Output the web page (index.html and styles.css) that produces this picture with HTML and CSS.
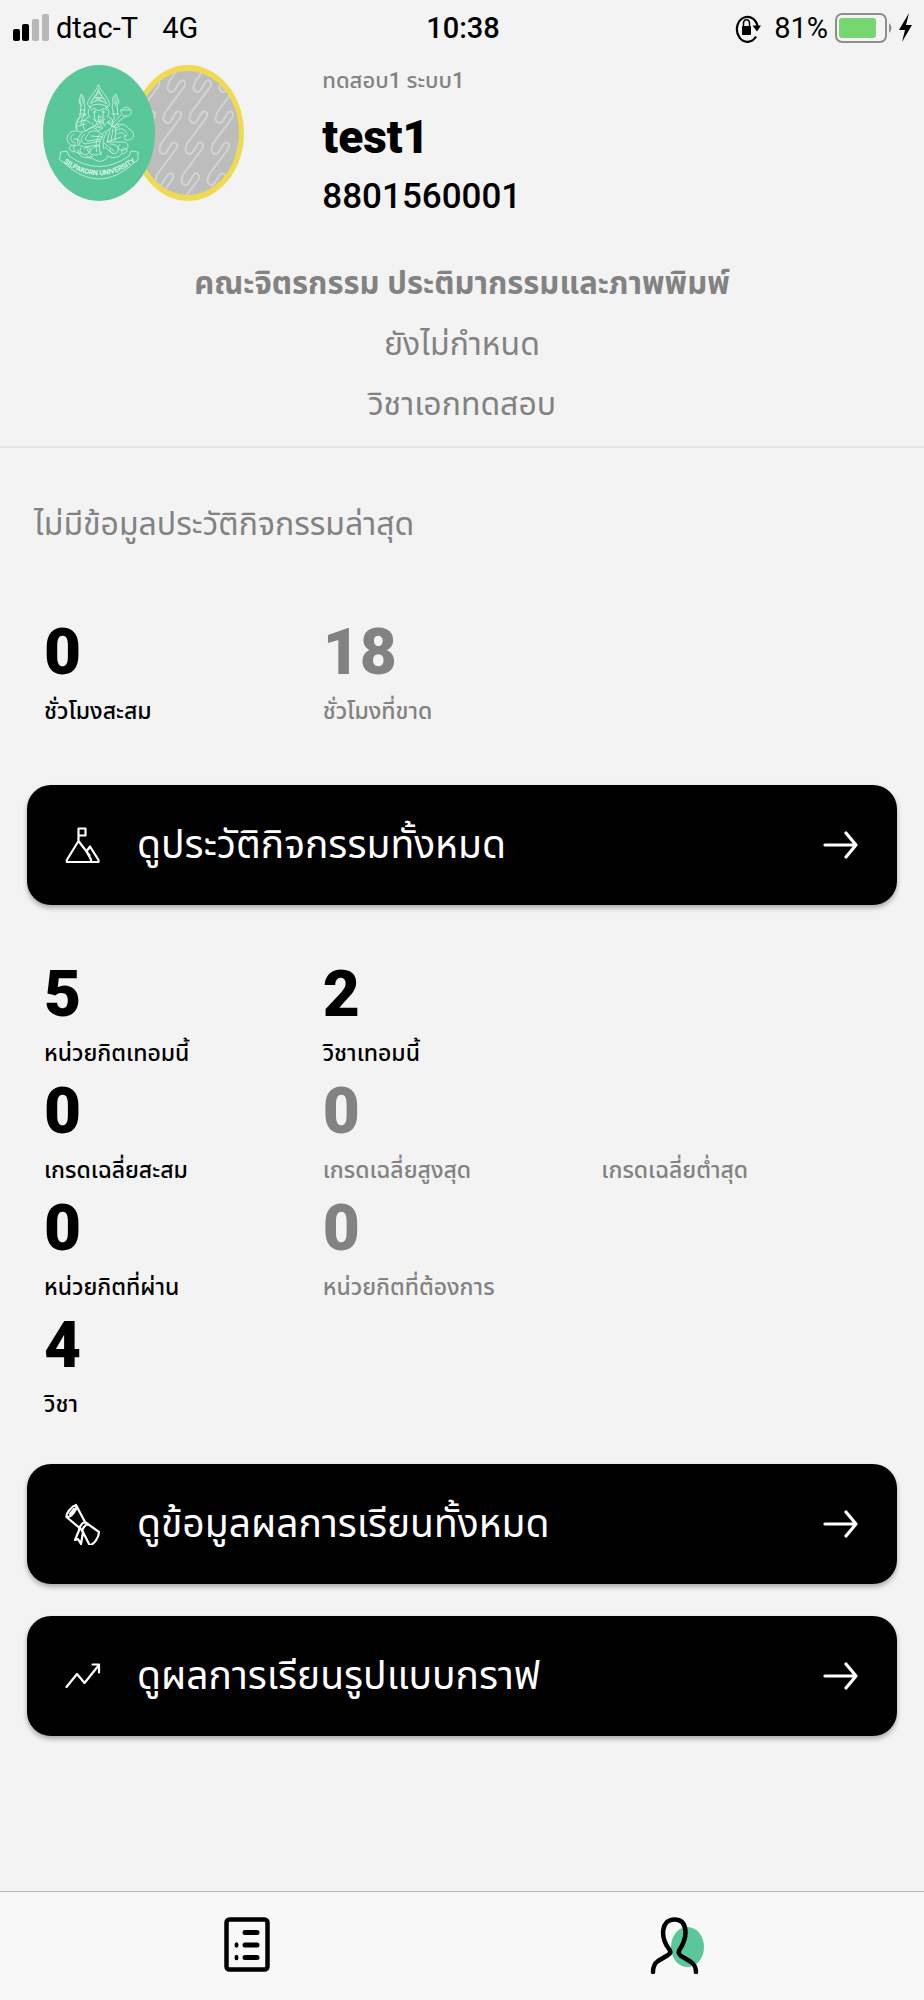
FILE: index.html
```html
<!DOCTYPE html>
<html lang="th">
<head>
<meta charset="utf-8">
<meta name="viewport" content="width=device-width, initial-scale=1">
<title>test1</title>
<link rel="stylesheet" href="styles.css">
</head>
<body>
<div class="status">
  <div class="status-left">
    <svg width="38" height="28" viewBox="0 0 38 28" aria-hidden="true"><rect x="1" y="15" width="7" height="12" rx="2"/><rect x="10" y="10" width="7" height="17" rx="2"/><rect x="20" y="5" width="7" height="22" rx="2" fill="#b8b8b8"/><rect x="30" y="0" width="7" height="27" rx="2" fill="#b8b8b8"/></svg>
    <span>dtac-T</span><span class="network">4G</span>
  </div>
  <time class="clock">10:38</time>
  <div class="status-right">
    <svg width="28" height="30" viewBox="0 0 28 30" aria-hidden="true"><path d="M22 23.500A10.500 12.500 0 1 1 23.500 13" fill="none" stroke="#000" stroke-width="2.200"/><path d="M18.500 12.500h8.500l-4 6z"/><rect x="8" y="13" width="9" height="9" rx="1"/><path d="M9.500 14v-3.500c0-5 6-5 6 0V14" fill="none" stroke="#000" stroke-width="1.500"/></svg>
    <span class="percent">81%</span>
    <svg width="80" height="32" viewBox="0 0 80 32" aria-hidden="true"><rect x="2" y="2" width="50" height="28" rx="6" fill="none" stroke="#8e8e8e" stroke-width="2"/><rect x="5" y="6" width="37" height="20" rx="3" fill="#77d572"/><path d="M55 11q5 5 0 10z" fill="#8e8e8e"/><path d="M75 1 65 18h6l-3 12 10-17h-6z"/></svg>
  </div>
</div>

<header class="profile">
  <div class="profile-row">
    <div class="avatars">
      <svg class="avatar" width="112" height="136" viewBox="0 0 112 136" role="img" aria-label="Silpakorn University">
        <ellipse cx="56" cy="68" rx="56" ry="68" fill="#5ac79a"/>
        <g class="emblem">
          <path d="M55.500 20C53 27 46 32 44 39l4 4M55.500 20C58 27 65 32 67 39l-4 4M55.500 24c-1 6-6 9-8 14M55.500 24c1 6 6 9 8 14M55.500 27l-3 5 3 3 3-3zM49 35q6-6 13 0M47 39q8-7 17 0M46 42q9-6 19 0M52 36l3-3 4 3"/>
          <path d="M48 42c-3 1-4 7-1 10M63 42c3 1 4 7 1 10M48 45q3-3 6 0 2 1 4 0 3-3 6 0M50 47h3M59 47h3M52 45c-2 8 1 12 4 17M60 45c1 8-2 11 2 16M56 50c-2 5 1 9 4 13l-4 2M55 52h4M55 55h4M56 58h4"/>
          <path d="M39 41c-3-4-2-9-1-12 2 2 4 4 3 9l1 4-1 9c-2 3-3 5-3 9M39 30l1 8M37 33l-1 4 2 4-1 10c-3 4-4 9-3 13M36 49h7M37 45h5M72 41c3-4 3-9 1-12-3 2-4 5-3 9l-1 4 2 9c1 3-1 5-3 6M72 31v8M75 34l1 3-2 4 1 9M69 49h6M78 45h10c1 4-1 6-5 6s-5-2-5-6zM80 44q3-4 7 0M78 50l-4 4-5 5-4-2M83 51l-7 5-5 6"/>
          <path d="M43 50c-6 1-11 5-10 13 0 5 8 5 13 1l8-5M46 52c-6 2-8 8-4 13M36 57q6-4 11 1M35 61l8-2M43 66c4-5 10-4 12 0M45 68q6-4 11-1l4 3M50 54q6 6 12 0M66 52c5 2 5 8 1 12l-7 4M49 58c1 4 6 5 9 4M67 55l-6 5M65 58l7 5 5-2"/>
          <path d="M34 66c-7-1-12 5-9 11 2 5 10 5 12 1 1-3-5-6-7-3M31 69c-5 2-4 8 1 9M39 68c-7 6-6 13 2 14l15-2M42 69c-6 4-4 9 0 10l15-3M45 70c-4 3-3 6 0 6l13-2M48 71l12 1M57 69c-4 5-5 12-3 18M60 70c-4 6-5 12-2 20M64 67c-4 6-5 11-3 17M67 65l-3 12M70 64l-2 12M73 63l-1 12"/>
          <path d="M69 62c7-5 14-3 18 3 6 2 4 11-3 10-4 0-4-5 0-5M72 66c5-4 10-2 12 2M74 69c4-3 8-1 9 3M78 72l-14 5h17c6 1 5 8-1 8-5 1-7-4-3-5M67 79c5 0 10 2 8 7s-9 2-8-2M61 78l10 8M62 82l7 6M64 91c8 4 17 0 15-6M32 79c-4 5 1 11 7 9M38 83c-4 5 4 9 8 5s-2-8-5-4M44 84c2 7 11 8 15 3M35 85c1 9 9 9 14 6M48 91c5 7 12 7 17 1M43 91l6 3M56 81c-4 0-8 2-9 5M29 80c-5 3-3 6 3 7M80 83c5 0 6 4 0 6"/>
          <path d="M18 87l6-1 2 5q30 21 60 0l2-5 7 1v8l-3 2q-36 34-72 0l-3-2z"/>
        </g>
        <path id="motto" d="M20 97Q56 124 93 96" fill="none"/>
        <text class="motto" text-anchor="middle"><textPath href="#motto" startOffset="50%">SILPAKORN UNIVERSITY</textPath></text>
      </svg>
      <svg class="avatar avatar-back" width="112" height="136" viewBox="0 0 112 136" aria-hidden="true">
        <defs>
          <clipPath id="disc"><ellipse cx="56" cy="68" rx="51" ry="62"/></clipPath>
          <path id="hook" d="M-7-4C-11 2-6 7-2 4L3-4C5-9 12-6 8 0L-12 27"/>
          <g id="row"><use href="#hook"/><use href="#hook" x="26"/><use href="#hook" x="52"/><use href="#hook" x="78"/><use href="#hook" x="104"/><use href="#hook" x="130"/></g>
        </defs>
        <ellipse cx="56" cy="68" rx="56" ry="68" fill="#f0da52"/>
        <ellipse cx="56" cy="68" rx="51" ry="62" fill="#bdbdbd"/>
        <g clip-path="url(#disc)" fill="none" stroke="#d3d3d3" stroke-width="2"><use href="#row" x="-4" y="-9"/><use href="#row" x="-8" y="22"/><use href="#row" x="-12" y="53"/><use href="#row" x="-16" y="84"/><use href="#row" x="-20" y="115"/></g>
      </svg>
    </div>
    <div class="identity">
      <p class="fullname">ทดสอบ1 ระบบ1</p>
      <h1 class="username">test1</h1>
      <p class="student-id">8801560001</p>
    </div>
  </div>
  <div class="faculty">
    <p class="faculty-name">คณะจิตรกรรม ประติมากรรมและภาพพิมพ์</p>
    <p>ยังไม่กำหนด</p>
    <p>วิชาเอกทดสอบ</p>
  </div>
</header>

<main class="content">
  <p class="empty">ไม่มีข้อมูลประวัติกิจกรรมล่าสุด</p>
  <dl class="stats">
    <div class="stat"><dt>ชั่วโมงสะสม</dt><dd>0</dd></div>
    <div class="stat muted"><dt>ชั่วโมงที่ขาด</dt><dd>18</dd></div>
  </dl>
  <div class="actions">
    <button class="action" type="button">
      <svg class="icon" width="36" height="42" viewBox="0 0 36 42" aria-hidden="true"><path d="M13.500 17V4.500h7v7h-7M13.500 17 1.800 36v2h31.700v-2L25 22.500l-3.500 5zM13.500 17l8 10.500 4.500 8v2M21.500 27.500l3 4"/></svg>
      <span>ดูประวัติกิจกรรมทั้งหมด</span>
      <svg class="arrow" width="36" height="28" viewBox="0 0 36 28" aria-hidden="true"><path d="M2 14h31M23 2l10 12-10 12"/></svg>
    </button>
  </div>
  <dl class="stats stats-study">
    <div class="stat"><dt>หน่วยกิตเทอมนี้</dt><dd>5</dd></div>
    <div class="stat"><dt>วิชาเทอมนี้</dt><dd>2</dd></div>
    <div class="stat first"><dt>เกรดเฉลี่ยสะสม</dt><dd>0</dd></div>
    <div class="stat muted"><dt>เกรดเฉลี่ยสูงสุด</dt><dd>0</dd></div>
    <div class="stat muted"><dt>เกรดเฉลี่ยต่ำสุด</dt><dd></dd></div>
    <div class="stat"><dt>หน่วยกิตที่ผ่าน</dt><dd>0</dd></div>
    <div class="stat muted"><dt>หน่วยกิตที่ต้องการ</dt><dd>0</dd></div>
    <div class="stat first"><dt>วิชา</dt><dd>4</dd></div>
  </dl>
  <div class="actions">
    <button class="action" type="button">
      <svg class="icon" width="36" height="42" viewBox="0 0 36 42" aria-hidden="true"><path d="M11 2C7 3 1 10 1.500 14L17 27l7.500 15C29 42 34 34 34 29L20 19 11 2zM11 2c2 4-5 13-9.500 12M9 6l-4 5M20 19c-3 1-5 4-6 7M23 21c-3 1-5 4-6 7M15 25l-5 12 3-1 3 5 2-12"/></svg>
      <span>ดูข้อมูลผลการเรียนทั้งหมด</span>
      <svg class="arrow" width="36" height="28" viewBox="0 0 36 28" aria-hidden="true"><path d="M2 14h31M23 2l10 12-10 12"/></svg>
    </button>
    <button class="action" type="button">
      <svg class="icon" width="36" height="42" viewBox="0 0 36 42" aria-hidden="true"><path d="M1.500 32 12 19l7.500 9L34 10M27.500 9.500H34v8"/></svg>
      <span>ดูผลการเรียนรูปแบบกราฟ</span>
      <svg class="arrow" width="36" height="28" viewBox="0 0 36 28" aria-hidden="true"><path d="M2 14h31M23 2l10 12-10 12"/></svg>
    </button>
  </div>
</main>

<nav class="tabs">
  <a class="tab" href="#list" aria-label="รายการ">
    <svg width="46" height="58" viewBox="0 0 46 58" aria-hidden="true"><rect x="2.500" y="3.500" width="41" height="50" rx="3" fill="none" stroke="#000" stroke-width="4.500"/><path d="M21 16.500h12M21 29h12M21 41.500h12" stroke="#000" stroke-width="5" stroke-linecap="round"/><ellipse cx="12.500" cy="29" rx="2" ry="2.700"/><ellipse cx="12.500" cy="41.500" rx="2" ry="2.700"/></svg>
  </a>
  <a class="tab" href="#profile" aria-label="โปรไฟล์" aria-current="page">
    <svg width="54" height="58" viewBox="0 0 54 58" aria-hidden="true"><ellipse cx="37.500" cy="31" rx="16.500" ry="20" fill="#5ac79a"/><path d="M3 56C3 50 5 47 8 45l10-6c3-2 3-3 1-6C10 21 11 3.500 24.500 3.500S38 21 30 33c-2 3-2 4 1 7l10 6c3 2 5 5 5 10" fill="none" stroke="#000" stroke-width="4.500" stroke-linecap="round"/></svg>
  </a>
</nav>
</body>
</html>
```
FILE: styles.css
```css
* { box-sizing: border-box; }

body {
  margin: 0;
  min-height: 100vh;
  display: flex;
  flex-direction: column;
  background: #f3f3f3;
  color: #000;
  font-family: Roboto, "Noto Sans Thai", "Noto Sans", sans-serif;
}

p, h1, dl, dd { margin: 0; }

.status {
  display: grid;
  grid-template-columns: 1fr auto 1fr;
  align-items: center;
  height: 56px;
  padding: 0 10px 0 12px;
  font-size: 29px;
}
.status-left, .status-right { display: flex; align-items: center; }
.status-left { gap: 6px; }
.status-right { justify-content: flex-end; }
.network { margin-left: 18px; }
.clock { font-weight: 500; }
.percent { margin: 0 6px 0 12px; }

.profile { border-bottom: 2px solid #e5e5e5; }
.profile-row {
  display: grid;
  grid-template-columns: 1fr 2fr;
  height: 176px;
  padding: 0 43px;
}
.avatars { display: flex; padding-top: 9px; }
.avatar { position: relative; z-index: 1; flex: none; }
.avatar-back { z-index: 0; margin-left: -23px; }
.emblem {
  fill: none;
  stroke: #d3f4e6;
  stroke-width: 0.8;
  stroke-linecap: round;
  stroke-linejoin: round;
}
.motto { font-size: 7px; font-weight: 500; fill: #e6fff4; }

.fullname { font-size: 22px; line-height: 50px; font-weight: 500; color: #828282; }
.username { font-size: 46px; line-height: 62px; font-weight: 900; }
.student-id { font-size: 35px; line-height: 58px; font-weight: 500; }

.faculty {
  padding: 22px 24px 12px;
  color: #828282;
  font-size: 32px;
  line-height: 60px;
  text-align: center;
}
.faculty-name { font-size: 31px; font-weight: 700; }

.content { padding: 0 27px 60px; }
.empty {
  padding: 46px 7px 63px;
  color: #828282;
  font-size: 32px;
  line-height: 60px;
}

.stats {
  display: grid;
  grid-template-columns: repeat(3, 1fr);
  padding: 0 17px 51px;
}
.stats-study { padding: 54px 17px 37px; }
.stat { display: flex; flex-direction: column-reverse; }
.stat.first { grid-column: 1; }
.stat dt { font-size: 23px; line-height: 45px; font-weight: 500; white-space: nowrap; }
.stat dd { height: 72px; font-size: 64px; line-height: 72px; font-weight: 900; }
.muted { color: #828282; }

.actions { display: grid; gap: 32px; }
.action {
  display: flex;
  align-items: center;
  gap: 36px;
  width: 100%;
  height: 120px;
  padding: 0 38px;
  border: 0;
  border-radius: 24px;
  background: #000;
  color: #fff;
  box-shadow: 0 3px 5px rgba(0, 0, 0, 0.3);
  font-family: inherit;
  font-size: 39px;
  line-height: 60px;
  text-align: left;
}
.action span { flex: 1; white-space: nowrap; }
.icon, .arrow {
  flex: none;
  fill: none;
  stroke: #fff;
  stroke-width: 2.2;
  stroke-linecap: round;
  stroke-linejoin: round;
}
.arrow { stroke-width: 3.2; }

.tabs {
  display: grid;
  grid-template-columns: 1fr 1fr;
  margin-top: auto;
  padding: 0 32px;
  border-top: 1px solid #b8b8b8;
  background: #f8f8f8;
}
.tab {
  display: flex;
  justify-content: center;
  padding: 24px 0 26px;
}
```
